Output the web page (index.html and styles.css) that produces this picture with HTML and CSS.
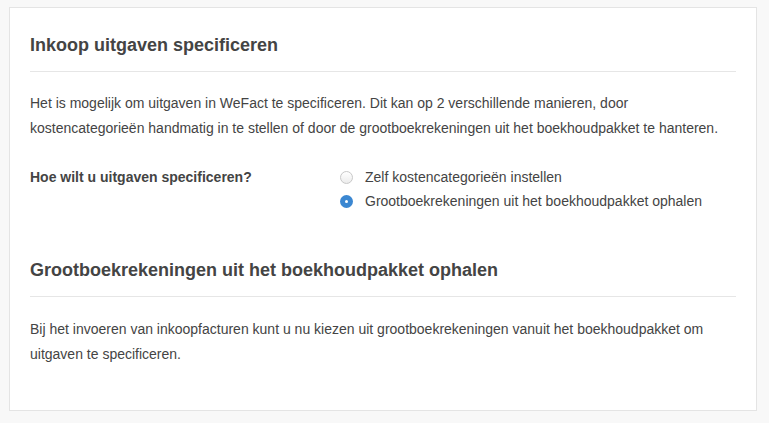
FILE: index.html
```html
<!DOCTYPE html>
<html lang="nl">
<head>
<meta charset="utf-8">
<title>Inkoop uitgaven specificeren</title>
<link rel="stylesheet" href="styles.css">
</head>
<body>
<div class="panel">
  <h2 class="section-title">Inkoop uitgaven specificeren</h2>
  <p class="text">Het is mogelijk om uitgaven in WeFact te specificeren. Dit kan op 2 verschillende manieren, door kostencategorieën handmatig in te stellen of door de grootboekrekeningen uit het boekhoudpakket te hanteren.</p>
  <div class="form-row">
    <div class="form-label">Hoe wilt u uitgaven specificeren?</div>
    <div class="options">
      <label class="option"><span class="radio"></span>Zelf kostencategorieën instellen</label>
      <label class="option"><span class="radio checked"></span>Grootboekrekeningen uit het boekhoudpakket ophalen</label>
    </div>
  </div>
  <h2 class="section-title second">Grootboekrekeningen uit het boekhoudpakket ophalen</h2>
  <p class="text last">Bij het invoeren van inkoopfacturen kunt u nu kiezen uit grootboekrekeningen vanuit het boekhoudpakket om uitgaven te specificeren.</p>
</div>
</body>
</html>
```

FILE: styles.css
```css
html, body {
  margin: 0;
  padding: 0;
  background: #f8f8f8;
  font-family: "Liberation Sans", Arial, sans-serif;
  color: #444;
}
.panel {
  box-sizing: border-box;
  margin: 7px 0 0 9px;
  width: 748px;
  height: 404px;
  background: #fff;
  border: 1px solid #e4e4e4;
  padding: 27px 20px 0 20px;
}
.section-title {
  margin: 0;
  font-size: 18px;
  line-height: 20px;
  font-weight: bold;
  color: #444;
  padding-bottom: 16px;
  border-bottom: 1px solid #e6e6e6;
}
.section-title.second {
  margin-top: 47px;
}
.text {
  margin: 19px 0 0 0;
  font-size: 14px;
  line-height: 25px;
  color: #444;
}
.text.last {
  margin-top: 20px;
}
.form-row {
  display: flex;
  margin-top: 24px;
}
.form-label {
  width: 310px;
  font-size: 14px;
  font-weight: bold;
  line-height: 24px;
}
.options {
  display: flex;
  flex-direction: column;
}
.option {
  display: flex;
  align-items: center;
  font-size: 14px;
  line-height: 24px;
}
.radio {
  box-sizing: border-box;
  width: 13px;
  height: 13px;
  border-radius: 50%;
  border: 1px solid #c8c8c8;
  background: linear-gradient(#fff, #ececec);
  margin-right: 12px;
  position: relative;
}
.radio.checked {
  border: none;
  background: #3b87d1;
}
.radio.checked::after {
  content: "";
  position: absolute;
  left: 5px;
  top: 5px;
  width: 3px;
  height: 3px;
  border-radius: 50%;
  background: #fff;
}
```
